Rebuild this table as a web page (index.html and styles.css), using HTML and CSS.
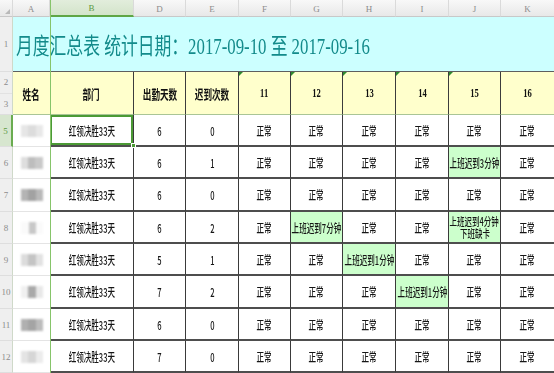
FILE: index.html
```html
<!DOCTYPE html>
<html lang="zh">
<head>
<meta charset="utf-8">
<title>月度汇总表</title>
<link rel="stylesheet" href="styles.css">
</head>
<body>
<div class="sheet">
  <div class="corner"><span class="corner-tri"></span></div>
  <div class="ch">A</div>
  <div class="ch ch-sel">B</div>
  <div class="ch">D</div>
  <div class="ch">E</div>
  <div class="ch">F</div>
  <div class="ch">G</div>
  <div class="ch">H</div>
  <div class="ch">I</div>
  <div class="ch">J</div>
  <div class="ch ch-last">K</div>

  <div class="rh">1</div>
  <div class="title"><span class="title-t">月度汇总表 统计日期：2017-09-10 至 2017-09-16</span></div>

  <div class="rh rh-23"><span class="rh-half">2</span><span class="rh-half">3</span></div>
  <div class="hd hd-a"><span class="t">姓名</span></div>
  <div class="hd"><span class="t">部门</span></div>
  <div class="hd"><span class="t">出勤天数</span></div>
  <div class="hd"><span class="t">迟到次数</span></div>
  <div class="hd hd-num mark"><span class="t">11</span></div>
  <div class="hd hd-num mark"><span class="t">12</span></div>
  <div class="hd hd-num mark"><span class="t">13</span></div>
  <div class="hd hd-num mark"><span class="t">14</span></div>
  <div class="hd hd-num mark"><span class="t">15</span></div>
  <div class="hd hd-num hd-last"><span class="t">16</span></div>

  <!-- row 5 -->
  <div class="rh rh-sel">5</div>
  <div class="c c-a"><span class="name n1"></span></div>
  <div class="c sel"><span class="t">红领决胜33天</span><i class="handle"></i></div>
  <div class="c"><span class="t">6</span></div>
  <div class="c"><span class="t">0</span></div>
  <div class="c"><span class="t">正常</span></div>
  <div class="c"><span class="t">正常</span></div>
  <div class="c"><span class="t">正常</span></div>
  <div class="c"><span class="t">正常</span></div>
  <div class="c"><span class="t">正常</span></div>
  <div class="c c-last"><span class="t">正常</span></div>

  <!-- row 6 -->
  <div class="rh">6</div>
  <div class="c c-a"><span class="name n2"></span></div>
  <div class="c"><span class="t">红领决胜33天</span></div>
  <div class="c"><span class="t">6</span></div>
  <div class="c"><span class="t">1</span></div>
  <div class="c"><span class="t">正常</span></div>
  <div class="c"><span class="t">正常</span></div>
  <div class="c"><span class="t">正常</span></div>
  <div class="c"><span class="t">正常</span></div>
  <div class="c late"><span class="t">上班迟到3分钟</span></div>
  <div class="c c-last"><span class="t">正常</span></div>

  <!-- row 7 -->
  <div class="rh">7</div>
  <div class="c c-a"><span class="name n3"></span></div>
  <div class="c"><span class="t">红领决胜33天</span></div>
  <div class="c"><span class="t">6</span></div>
  <div class="c"><span class="t">0</span></div>
  <div class="c"><span class="t">正常</span></div>
  <div class="c"><span class="t">正常</span></div>
  <div class="c"><span class="t">正常</span></div>
  <div class="c"><span class="t">正常</span></div>
  <div class="c"><span class="t">正常</span></div>
  <div class="c c-last"><span class="t">正常</span></div>

  <!-- row 8 -->
  <div class="rh">8</div>
  <div class="c c-a"><span class="name n4"></span></div>
  <div class="c"><span class="t">红领决胜33天</span></div>
  <div class="c"><span class="t">6</span></div>
  <div class="c"><span class="t">2</span></div>
  <div class="c"><span class="t">正常</span></div>
  <div class="c late"><span class="t">上班迟到7分钟</span></div>
  <div class="c"><span class="t">正常</span></div>
  <div class="c"><span class="t">正常</span></div>
  <div class="c late c-two"><span class="t">上班迟到4分钟</span><span class="t">下班缺卡</span></div>
  <div class="c c-last"><span class="t">正常</span></div>

  <!-- row 9 -->
  <div class="rh">9</div>
  <div class="c c-a"><span class="name n5"></span></div>
  <div class="c"><span class="t">红领决胜33天</span></div>
  <div class="c"><span class="t">5</span></div>
  <div class="c"><span class="t">1</span></div>
  <div class="c"><span class="t">正常</span></div>
  <div class="c"><span class="t">正常</span></div>
  <div class="c late"><span class="t">上班迟到1分钟</span></div>
  <div class="c"><span class="t">正常</span></div>
  <div class="c"><span class="t">正常</span></div>
  <div class="c c-last"><span class="t">正常</span></div>

  <!-- row 10 -->
  <div class="rh">10</div>
  <div class="c c-a"><span class="name n6"></span></div>
  <div class="c"><span class="t">红领决胜33天</span></div>
  <div class="c"><span class="t">7</span></div>
  <div class="c"><span class="t">2</span></div>
  <div class="c"><span class="t">正常</span></div>
  <div class="c"><span class="t">正常</span></div>
  <div class="c"><span class="t">正常</span></div>
  <div class="c late"><span class="t">上班迟到1分钟</span></div>
  <div class="c"><span class="t">正常</span></div>
  <div class="c c-last"><span class="t">正常</span></div>

  <!-- row 11 -->
  <div class="rh">11</div>
  <div class="c c-a"><span class="name n7"></span></div>
  <div class="c"><span class="t">红领决胜33天</span></div>
  <div class="c"><span class="t">6</span></div>
  <div class="c"><span class="t">0</span></div>
  <div class="c"><span class="t">正常</span></div>
  <div class="c"><span class="t">正常</span></div>
  <div class="c"><span class="t">正常</span></div>
  <div class="c"><span class="t">正常</span></div>
  <div class="c"><span class="t">正常</span></div>
  <div class="c c-last"><span class="t">正常</span></div>

  <!-- row 12 -->
  <div class="rh">12</div>
  <div class="c c-a"><span class="name n8"></span></div>
  <div class="c"><span class="t">红领决胜33天</span></div>
  <div class="c"><span class="t">7</span></div>
  <div class="c"><span class="t">0</span></div>
  <div class="c"><span class="t">正常</span></div>
  <div class="c"><span class="t">正常</span></div>
  <div class="c"><span class="t">正常</span></div>
  <div class="c"><span class="t">正常</span></div>
  <div class="c"><span class="t">正常</span></div>
  <div class="c c-last"><span class="t">正常</span></div>

  <i class="col-line"></i>
</div>
</body>
</html>
```

FILE: styles.css
```css
* { box-sizing: border-box; margin: 0; padding: 0; }
html, body { width: 554px; height: 373px; overflow: hidden; background: #fff; }
body { font-family: "Noto Sans CJK SC", "Liberation Sans", sans-serif; }

.sheet {
  position: relative;
  display: grid;
  grid-template-columns: 13px 37px 84px 52px 53px 52px 52px 53px 53px 52px 53px;
  grid-template-rows: 17px 55px 43px 32px 32px 33px 32px 32px 33px 32px 32px;
  width: 554px;
  height: 373px;
  overflow: hidden;
}

/* column headers */
.corner, .ch {
  background: linear-gradient(#f8f8f8, #e8e8e8);
  border-bottom: 1px solid #c8c8c8;
  border-right: 1px solid #dadada;
  font-family: "Liberation Serif", serif;
  font-size: 9px;
  color: #8c8c8c;
  display: flex;
  align-items: flex-end;
  justify-content: center;
  padding-bottom: 2px;
}
.corner { position: relative; }
.corner-tri {
  position: absolute;
  right: 2px;
  bottom: 2px;
  border-bottom: 5px solid #b9b9b9;
  border-left: 5px solid transparent;
}
.ch-sel {
  background: linear-gradient(#e2eddc, #d3e4ca);
  border-bottom: 2px solid #5fa646;
  color: #5c9a44;
}
.ch-last { border-right: none; }

/* row headers */
.rh {
  background: #efefef;
  border-right: 1px solid #cfd9c9;
  border-bottom: 1px solid #dedede;
  font-family: "Liberation Serif", serif;
  font-size: 9px;
  color: #8c8c8c;
  display: flex;
  align-items: center;
  justify-content: center;
}
.rh-23 { flex-direction: column; }
.rh-half {
  flex: 1;
  width: 100%;
  display: flex;
  align-items: center;
  justify-content: center;
}
.rh-half:first-child { border-bottom: 1px solid #e2e2e2; }
.rh-sel {
  background: #d7e6cf;
  border-right: 2px solid #6aac50;
  color: #5c9a44;
}

/* title */
.title {
  grid-column: span 10;
  background: #ccffff;
  border-bottom: 1px solid #5e5e5e;
  display: flex;
  align-items: center;
  padding-left: 3px;
  overflow: hidden;
}
.title-t {
  display: inline-block;
  font-family: "Liberation Serif", "Noto Sans CJK SC", serif;
  font-size: 23px;
  color: #138b8b;
  white-space: nowrap;
  transform: scaleX(0.73);
  transform-origin: left center;
}

/* header row (rows 2-3) */
.hd {
  position: relative;
  background: #ffffcc;
  border-right: 1px solid #3c3c3c;
  border-bottom: 1px solid #a9c596;
  display: flex;
  align-items: center;
  justify-content: center;
  font-size: 13px;
  font-weight: 700;
  color: #111;
}
.hd-a { border-right: none; }
.hd-num { font-family: "Liberation Serif", serif; font-size: 13px; }
.hd-last { border-right: none; }
.mark::before {
  content: "";
  position: absolute;
  left: 0;
  top: 0;
  border-top: 4px solid #2f8a2f;
  border-right: 4px solid transparent;
}

/* body cells */
.c {
  position: relative;
  border-right: 1px solid #3a3a3a;
  border-bottom: 2px solid #4e4e4e;
  display: flex;
  align-items: center;
  justify-content: center;
  font-size: 12px;
  font-weight: 500;
  color: #161616;
}
.c-a {
  border-right: none;
  border-bottom: 1px solid #e4e4e4;
}
.c-last { border-right: none; }
.late { background: #ccffcc; }
.c-two {
  flex-direction: column;
  font-size: 11px;
  line-height: 12px;
}

.t {
  display: inline-block;
  white-space: nowrap;
  transform: scaleX(0.63);
}
.c-two .t { transform: scaleX(0.68); }
.hd .t { transform: scaleX(0.66); }

.sel { box-shadow: inset 0 0 0 2px #4b9a35; }
.handle {
  position: absolute;
  right: -3px;
  bottom: -3px;
  width: 5px;
  height: 5px;
  background: #4b9a35;
  border: 1px solid #fff;
  z-index: 2;
}

/* selected column B left edge line */
.col-line {
  position: absolute;
  left: 50px;
  top: 0;
  bottom: 0;
  width: 1px;
  background: #86c46a;
}

/* blurred names */
.name {
  display: block;
  width: 22px;
  height: 12px;
  filter: blur(0.8px);
}
.n1 { background: linear-gradient(90deg, #e6e6e6 0 33%, #dcdcdc 33% 66%, #e8e8e8 66%); }
.n2 { background: linear-gradient(90deg, #dedede 0 30%, #bdbdbd 30% 62%, #c9c9c9 62%); }
.n3 { background: linear-gradient(90deg, #b4b4b4 0 33%, #a2a2a2 33% 66%, #b9b9b9 66%); }
.n4 { background: linear-gradient(90deg, #fafafa 0 35%, #c8c8c8 35% 70%, #fafafa 70%); }
.n5 { background: linear-gradient(90deg, #dcdcdc 0 33%, #c4c4c4 33% 66%, #e2e2e2 66%); }
.n6 { background: linear-gradient(90deg, #f0f0f0 0 33%, #a9a9a9 33% 66%, #e8e8e8 66%); }
.n7 { background: linear-gradient(90deg, #b0b0b0 0 33%, #a4a4a4 33% 66%, #bcbcbc 66%); }
.n8 { background: linear-gradient(90deg, #e4e4e4 0 33%, #d6d6d6 33% 66%, #ececec 66%); }
```
